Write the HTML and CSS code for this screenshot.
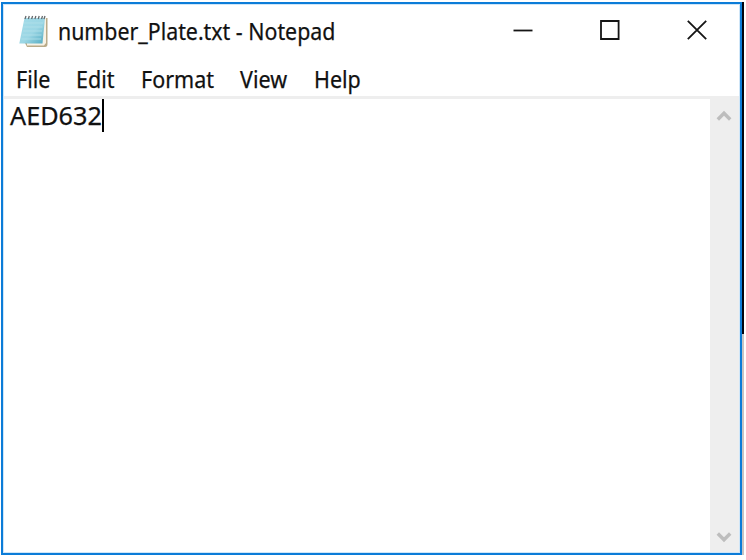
FILE: index.html
```html
<!DOCTYPE html>
<html lang="en">
<head>
<meta charset="utf-8">
<title>number_Plate.txt - Notepad</title>
<link rel="stylesheet" href="styles.css">
</head>
<body>
<div class="desktop">
<main class="window">
  <header class="titlebar">
    <svg class="app-icon" width="30" height="34" viewBox="0 0 30 34">
      <defs><linearGradient id="page" x1="0" y1="0" x2="1" y2="1"><stop offset="0" stop-color="#a4dce9"/><stop offset=".55" stop-color="#9bd6e4"/><stop offset="1" stop-color="#50a9c1"/></linearGradient></defs>
      <path d="M8 4H28.5V30Q28.5 33 26 33H8L6 29Z" fill="#b9aa88"/>
      <path d="M8 4H27V29L25 31.5H8Z" fill="#f7f2e5"/>
      <path d="M5.5 4H26L23.5 29.5H.3Z" fill="url(#page)"/>
      <path d="M5 9H24M4.5 13H23.5M4 17H23M3.2 21H22.5M2.5 25H22" stroke="#b2e1ea" stroke-width=".8"/>
      <path d="M6 5l1-3M9.3 5l1-3M12.6 5l1-3M15.9 5l1-3M19.2 5l1-3M22.5 5l1-3M25 5l1-3" stroke="#64696c" stroke-width="1.3"/>
    </svg>
    <h1 class="title"><span>number_Plate.txt - Notepad</span></h1>
    <div class="controls">
      <svg width="20" height="20" viewBox="0 0 20 20"><path d="M.5 10.5H19.5"/></svg>
      <svg width="20" height="20" viewBox="0 0 20 20"><path d="M1 1H18.6V19H1Z"/></svg>
      <svg width="20" height="20" viewBox="0 0 20 20"><path d="M.8 .8L19.2 19.2M19.2 .8L.8 19.2"/></svg>
    </div>
  </header>
  <nav class="menu">
    <span>File</span><span>Edit</span><span>Format</span><span>View</span><span>Help</span>
  </nav>
  <section class="body">
    <div class="editor"><span class="content">AED632</span><i class="caret"></i></div>
    <div class="scrollbar">
      <svg width="16" height="13" viewBox="0 0 16 13"><path d="M1.8 10.5L8 4.2L14.2 10.5"/></svg>
      <svg width="16" height="13" viewBox="0 0 16 13"><path d="M1.8 2.5L8 8.8L14.2 2.5"/></svg>
    </div>
  </section>
</main>
<div class="backdrop"></div>
</div>
</body>
</html>
```
FILE: styles.css
```css
* { box-sizing: border-box; }
body { margin: 0; background: #fff; font-family: "Noto Sans", "Open Sans", sans-serif; color: #111; -webkit-text-stroke: .25px #111; }
.desktop { display: flex; width: 744px; height: 555px; padding: 2px 0 0 1px; }
.window { width: 741px; height: 553px; display: flex; flex-direction: column; border: 2px solid #0b7cd8; box-shadow: inset 0 0 0 1px #cfe6f8; background: #fff; }
.backdrop { width: 2px; height: 553px; background: linear-gradient(#020510 332px, #c6c4c4 332px); }
.titlebar { height: 59px; flex: none; display: flex; align-items: flex-start; padding: 10px 0 0 16px; }
.app-icon { flex: none; }
.title { margin: 1px 0 0 9px; font-size: 23.5px; line-height: 32px; font-weight: 400; width: 290px; white-space: nowrap; }
.title span, .menu span, .content { display: inline-block; transform-origin: 0 50%; white-space: nowrap; }
.title span { transform: scaleX(.908); }
.controls { display: flex; gap: 67px; margin: 6px 0 0 165px; }
.controls svg { fill: none; stroke: #151515; stroke-width: 1.8; display: block; }
.menu { height: 33px; flex: none; display: grid; grid-template-columns: 60px 65px 99px 74px 60px; padding-left: 13px; font-size: 23px; line-height: 32px; }
.menu span { transform: scaleX(.935); }
.body { flex: 1; display: flex; border-top: 3px solid #eee; margin: 0 1px 1px; }
.editor { flex: 1; display: flex; align-items: flex-start; padding-left: 6px; }
.content { font-size: 25px; line-height: 32px; width: 92px; transform: scaleX(1.01); }
.caret { width: 2px; height: 33px; background: #000; }
.scrollbar { width: 29px; display: flex; flex-direction: column; justify-content: space-between; padding: 10px 0 8px 6px; background: #eee; }
.scrollbar svg { fill: none; stroke: #bdbdbd; stroke-width: 3.4; }
```
